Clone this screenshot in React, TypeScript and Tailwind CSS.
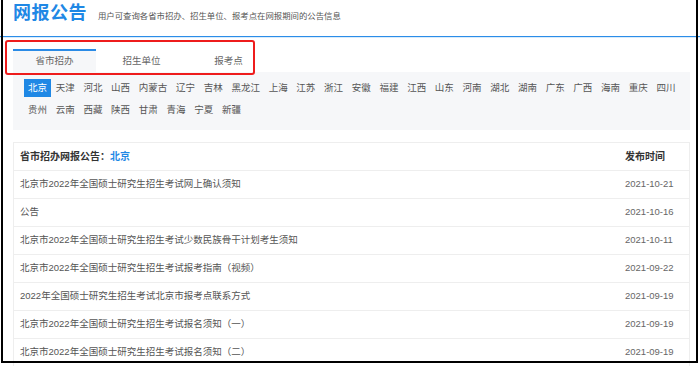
import React from "react";

const provinces = [
  "北京", "天津", "河北", "山西", "内蒙古", "辽宁", "吉林", "黑龙江", "上海", "江苏", "浙江", "安徽",
  "福建", "江西", "山东", "河南", "湖北", "湖南", "广东", "广西", "海南", "重庆", "四川",
  "贵州", "云南", "西藏", "陕西", "甘肃", "青海", "宁夏", "新疆",
];

const notices = [
  { title: "北京市2022年全国硕士研究生招生考试网上确认须知", date: "2021-10-21" },
  { title: "公告", date: "2021-10-16" },
  { title: "北京市2022年全国硕士研究生招生考试少数民族骨干计划考生须知", date: "2021-10-11" },
  { title: "北京市2022年全国硕士研究生招生考试报考指南（视频）", date: "2021-09-22" },
  { title: "2022年全国硕士研究生招生考试北京市报考点联系方式", date: "2021-09-19" },
  { title: "北京市2022年全国硕士研究生招生考试报名须知（一）", date: "2021-09-19" },
  { title: "北京市2022年全国硕士研究生招生考试报名须知（二）", date: "2021-09-19" },
];

const tabs = ["省市招办", "招生单位", "报考点"];

export default function App() {
  return (
    <div className="relative w-[700px] h-[366px] overflow-hidden bg-white font-['Liberation_Sans','Noto_Sans_CJK_SC',sans-serif]">
      {/* Header */}
      <div className="h-[37px] flex items-start pt-[4px] px-[13px] border-b border-[#2b8de8] shadow-[0_1px_0_#d8ebfb]">
        <h1 className="text-[18px] leading-[19px] font-bold text-[#1f88e5] tracking-[0.5px]">网报公告</h1>
        <p className="ml-[11px] mt-[7px] text-[8.4px] leading-[10px] text-[#555]">
          用户可查询各省市招办、招生单位、报考点在网报期间的公告信息
        </p>
      </div>

      <div className="pl-[13px] pr-[10px]">
        {/* Tabs */}
        <div className="mt-[12px] flex gap-[4px]">
          {tabs.map((tab, i) => (
            <div
              key={tab}
              className={`w-[83px] h-[23px] flex items-center justify-center text-[9.5px] text-[#666] border-t-2 ${
                i === 0 ? "border-[#2a8be6] bg-[#f6f7f9]" : "border-transparent"
              }`}
            >
              {tab}
            </div>
          ))}
        </div>

        {/* Province list */}
        <div className="bg-[#f6f7f9] pt-[7px] pb-[11px] pl-[11px] pr-[4px] flex flex-wrap gap-y-[4px] gap-x-[0.7px]">
          {provinces.map((p, i) => (
            <span
              key={p}
              className={`h-[18px] leading-[18px] px-[4px] text-[9.5px] ${
                i === 0 ? "bg-[#1f88e5] text-white" : "text-[#555]"
              }`}
            >
              {p}
            </span>
          ))}
        </div>

        {/* Notice table */}
        <div className="mt-[12px] border border-[#eeeeee]">
          <div className="h-[28px] flex items-center border-b border-[#eeeeee] text-[10px] font-bold text-[#333]">
            <div className="flex-1 pl-[6px]">
              省市招办网报公告：<span className="text-[#1f88e5]">北京</span>
            </div>
            <div className="w-[64px]">发布时间</div>
          </div>
          {notices.map((n, i) => (
            <div key={i} className="h-[28px] flex items-center border-b border-[#eeeeee] text-[9.5px] text-[#555]">
              <div className="flex-1 pl-[6px]">{n.title}</div>
              <div className="w-[64px] text-[#666]">{n.date}</div>
            </div>
          ))}
        </div>
      </div>

      {/* Annotation overlays */}
      <div className="absolute left-[5px] top-[40px] w-[250px] h-[35px] border-[2.5px] border-[#ee1c1c] rounded-[3px]" />
      <div className="absolute left-[1px] top-0 w-[697px] h-[363px] border-l-2 border-r-2 border-b-2 border-black" />
    </div>
  );
}
